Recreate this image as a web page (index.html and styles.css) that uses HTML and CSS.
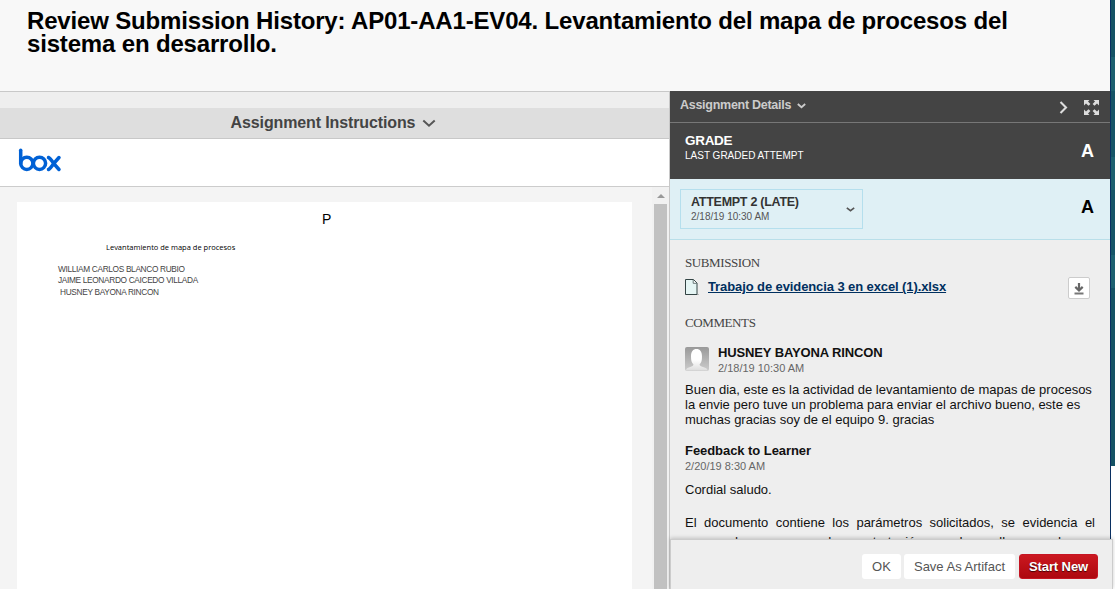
FILE: index.html
```html
<!DOCTYPE html>
<html lang="en">
<head>
<meta charset="utf-8">
<title>Review Submission History</title>
<link rel="stylesheet" href="styles.css">
</head>
<body>
<div class="app">
  <div class="main">
    <header class="page-head"><h1>Review Submission History: AP01-AA1-EV04. Levantamiento del mapa de procesos del<br>sistema en desarrollo.</h1></header>
    <div class="columns">
      <section class="viewer">
        <div class="spacer"></div>
        <div class="instructions"><span>Assignment Instructions</span>
          <svg width="14" height="9" viewBox="0 0 14 9"><path d="M1.300 1.600 7 6.700l5.700-5.100" fill="none" stroke="#555" stroke-width="2"/></svg>
        </div>
        <div class="box-bar">
          <svg width="44" height="26" viewBox="0 0 44 26" fill="none" stroke="#0061d5" stroke-width="3.500" stroke-linecap="round"><path d="M2.700 2.300V15.300"/><circle cx="8.800" cy="15.300" r="6.100"/><circle cx="21.500" cy="15.300" r="6.100"/><path d="M30.500 9.500Q32 10 35.700 15.500Q32 21 30.500 21.500M41 9.500 35.700 15.500 41 21.500"/></svg>
        </div>
        <div class="doc">
          <div class="doc-area">
            <div class="paper">
              <div class="doc-p">P</div>
              <div class="doc-title">Levantamiento de mapa de procesos</div>
              <div class="names"><div>WILLIAM CARLOS BLANCO RUBIO</div><div>JAIME LEONARDO CAICEDO VILLADA</div><div class="n3">HUSNEY BAYONA RINCON</div></div>
            </div>
          </div>
          <div class="scrollbar"><div class="arrow"></div><div class="thumb"></div></div>
        </div>
      </section>
      <aside class="side">
        <div class="details">
          <span>Assignment Details</span>
          <svg class="details-chev" width="9" height="6" viewBox="0 0 9 6"><path d="M.8 1 4.500 4.200 8.200 1" fill="none" stroke="#ccc" stroke-width="1.800"/></svg>
          <svg class="next" width="9" height="13" viewBox="0 0 9 13"><path d="M1.500 1 7 6.500 1.500 12" fill="none" stroke="#ddd" stroke-width="2.100"/></svg>
          <svg class="expand" width="15" height="15" viewBox="0 0 15 15" fill="#ddd"><path d="M0 0h5.500L4 1.500 6.400 4 4.500 5.800 2 3.500 0 5.500zM15 0H9.500L11 1.500 8.600 4l1.900 1.800L13 3.500l2 2zM0 15h5.500L4 13.500 6.400 11 4.500 9.200 2 11.500l-2-2zM15 15H9.500l1.500-1.500L8.600 11l1.900-1.800 2.500 2.300 2-2z"/></svg>
        </div>
        <div class="grade"><div><div class="grade-title">GRADE</div><div class="grade-sub">LAST GRADED ATTEMPT</div></div><b class="mark">A</b></div>
        <div class="attempt">
          <div class="select"><div><div class="select-title">ATTEMPT 2 (LATE)</div><div class="select-date">2/18/19 10:30 AM</div></div>
            <svg width="9" height="5" viewBox="0 0 9 5"><path d="M.8.8 4.500 3.700 8.200.8" fill="none" stroke="#555" stroke-width="1.600"/></svg></div>
          <b class="mark">A</b>
        </div>
        <div class="content">
          <div class="section">SUBMISSION</div>
          <div class="file">
            <svg width="14" height="17" viewBox="0 0 14 17"><path d="M0 15.500h14" stroke="#bbb"/><path d="M.5.500h8l3.500 3.500v11.500H.5z" fill="#e5f5f4" stroke="#344"/><path d="M8.200 1v3.300h3.500" fill="#fff" stroke="#455" stroke-width=".8"/></svg>
            <a>Trabajo de evidencia 3 en excel (1).xlsx</a>
            <div class="download"><svg width="10" height="12" viewBox="0 0 10 12"><path d="M5 0v7M1.300 3.900 5 7.500l3.700-3.600" stroke="#666" stroke-width="2.200" fill="none"/><path d="M.5 10.500h9" stroke="#777" stroke-width="2"/></svg></div>
          </div>
          <div class="section s2">COMMENTS</div>
          <div class="person">
            <svg width="24" height="24" viewBox="0 0 24 24"><defs><linearGradient id="g" x2="0" y2="1"><stop stop-color="#999"/><stop offset="1" stop-color="#ccc"/></linearGradient><linearGradient id="w" x2="0" y2="1"><stop offset=".5" stop-color="#fff"/><stop offset="1" stop-color="#ddd"/></linearGradient></defs><rect width="24" height="24" rx="2" fill="url(#g)"/><path d="M1 23.500c0-4 7-3 7.500-6C6.500 16 6 13 6 9.500 6 4.500 8 2 11.500 2S17 4.500 17 9.500c0 3.500-.5 6.500-2.500 8 .5 3 8 2 8 6z" fill="url(#w)"/></svg>
            <div><div class="person-name">HUSNEY BAYONA RINCON</div><div class="date">2/18/19 10:30 AM</div></div>
          </div>
          <div class="comment"><div>Buen dia, este es la actividad de levantamiento de mapas de procesos</div><div>la envie pero tuve un problema para enviar el archivo bueno, este es</div><div>muchas gracias soy de el equipo 9. gracias</div></div>
          <div class="feedback">Feedback to Learner</div>
          <div class="date fdate">2/20/19 8:30 AM</div>
          <div class="saludo">Cordial saludo.</div>
          <div class="justified">El documento contiene los parámetros solicitados, se evidencia el</div>
          <div class="justified cut">mapa de procesos de contratación y desarrollo cuando se</div>
        </div>
      </aside>
    </div>
  </div>
  <div class="edge"></div>
  <div class="backdrop"></div>
  <footer><button class="ok">OK</button><button class="save">Save As Artifact</button><button class="new">Start New</button></footer>
</div>
</body>
</html>
```
FILE: styles.css
```css
*{box-sizing:border-box}
body{margin:0;font-family:"Liberation Sans",Arial,sans-serif;font-size:12.500px;color:#111}
.app{width:1115px;height:589px;display:flex;position:relative;overflow:hidden;white-space:nowrap}
svg{display:block;flex:none}
.main{width:1110px;height:589px;background:#f8f8f8;display:flex;flex-direction:column}
.edge{width:1px;height:540px;background:#092f61}
.backdrop{width:4px;height:466px;background:linear-gradient(#145265 0 57px,#1c6070 57px 91px,#155467 91px 157px,#1c6070 157px 190px,#155467 190px 255px,#1c6070 255px 288px,#145265 288px)}
.page-head{height:91px;padding:9px 27px}
h1{margin:0;font-size:24px;line-height:23px;letter-spacing:-.168px;color:#000}
.columns{display:flex;height:498px}
.viewer{width:670px;border-top:1px solid #c8c8c8;border-right:1px solid #c8c8c8;display:flex;flex-direction:column}
.spacer{height:16px;background:#eee}
.instructions{height:31px;background:#dedede;border-bottom:1px solid #c8c8c8;display:flex;align-items:center;justify-content:center;gap:7px;padding-right:2px;font-size:16px;letter-spacing:-.12px;font-weight:bold;color:#444}
.box-bar{height:48px;background:#fff;border-bottom:1px solid #ccc;padding:9px 18px}
.doc{height:402px;display:flex;background:#f4f4f4}
.doc-area{width:652px;padding:15px 0 0 17px}
.paper{width:615px;height:387px;background:#fff;padding:9px 41px;color:#000}
.doc-p{font:14px/17px "Liberation Sans",Arial,sans-serif;padding-left:264px}
.doc-title{font:7.500px/12px "Open Sans",sans-serif;margin-top:13px;padding-left:48px}
.names{font-size:8.300px;letter-spacing:-.33px;line-height:11.500px;margin-top:10.500px;color:#444}
.n3{padding-left:2px}
.scrollbar{width:17px;background:#f1f1f1;padding:7px 2px 0}
.arrow{width:0;height:0;margin-left:3px;border:4px solid transparent;border-top:0;border-bottom-color:#999}
.thumb{width:13px;height:385px;margin-top:6px;background:#c1c1c1}
.side{width:440px;background:#eee}
.details{height:32px;background:#444;border-bottom:1px solid #777;display:flex;align-items:flex-start;padding:6px 10px;color:#ccc;font-weight:bold;line-height:16px;letter-spacing:-.27px}
.details-chev{margin:6px 0 0 6px}
.next{margin:4px 16px 0 auto}
.expand{margin:3px 1px 0 0}
.grade{height:56px;background:#444;color:#fff;display:flex;justify-content:space-between;padding:9px 16px 0 15px}
.grade-title{font-size:13.500px;font-weight:bold;line-height:17px;letter-spacing:-.3px}
.grade-sub{font-size:10px;line-height:13px}
.mark{font-size:18px;line-height:20px;margin-top:9px}
.attempt{height:61px;background:#dff0f5;border-bottom:1px solid #b9dfe9;display:flex;justify-content:space-between;padding:10px 16px 0 10px;color:#000}
.select{width:183px;height:40px;border:1px solid #b5dfed;display:flex;justify-content:space-between;align-items:center;padding:0 7px 0 10px}
.select-title{font-weight:bold;line-height:15px;letter-spacing:-.27px;color:#333}
.select-date{font-size:10px;line-height:14px;color:#555}
.attempt .mark{margin-top:8px}
.content{padding:16px 15px 0;height:349px;overflow:hidden}
.section{font:13px/14px "Liberation Serif",serif;letter-spacing:-.4px;color:#444}
.file{display:flex;height:22px;margin-top:7px}
.file svg{margin-top:2px}
.file a{font-size:13px;font-weight:bold;line-height:20px;letter-spacing:-.1px;color:#00305f;text-decoration:underline;margin-left:9px}
.download{width:22px;height:22px;background:#fff;border:1px solid #ccc;border-radius:2px;margin:0 5px 0 auto;display:grid;place-items:center}
.download svg{margin:1px 0 0}
.s2{margin-top:17px}
.person{display:flex;gap:9px;margin-top:15px;height:31px}
.person>svg{margin-top:2px}
.person-name{font-size:13px;font-weight:bold;line-height:15px;letter-spacing:-.13px}
.date{font-size:11px;line-height:15px;color:#666}
.person .date{margin-top:1px}
.comment{font-size:13px;line-height:15px;margin-top:6px}
.feedback{font-size:13px;font-weight:bold;line-height:15px;letter-spacing:-.06px;margin-top:16px}
.fdate{margin-top:1px}
.saludo{font-size:13px;line-height:15px;margin-top:8px}
.justified{width:410px;font-size:13px;line-height:18px;margin-top:17px;text-align-last:justify}
.cut{margin-top:1px}
footer{position:absolute;left:670px;top:539px;width:443px;height:50px;background:#eee;border:1px solid #ccc;border-bottom:0;box-shadow:0 -1px 4px #0003;display:flex;justify-content:flex-end;gap:3px;padding:14px 14px 0}
button{height:25px;border:0;border-radius:3px;background:#fff;color:#555;font:13px "Liberation Sans",Arial,sans-serif;padding:0}
.ok{width:39px}
.save{width:111px}
.new{width:79px;margin-left:1px;background:linear-gradient(#cb1820,#ad080f);border:1px solid #c51523;color:#fff;font-weight:bold;letter-spacing:-.1px;text-shadow:0 1px 1px #400}
```
